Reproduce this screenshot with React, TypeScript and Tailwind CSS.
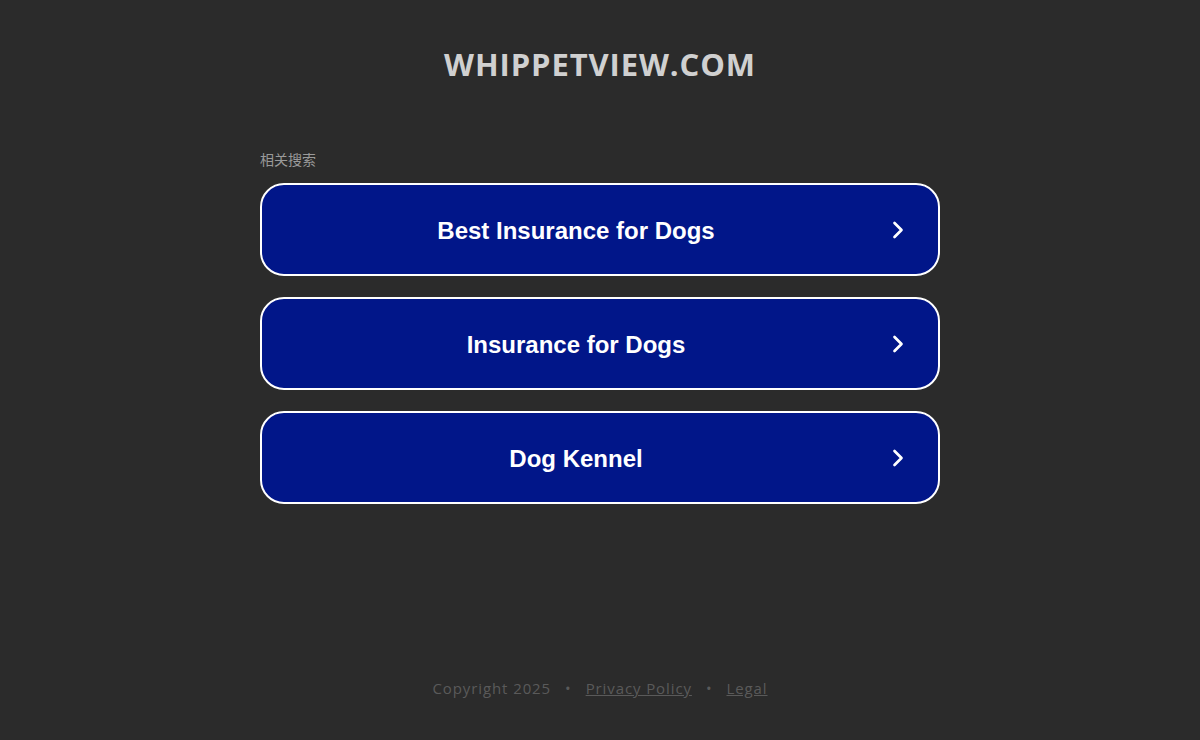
import { ChevronRight } from "lucide-react";

const TERMS = ["Best Insurance for Dogs", "Insurance for Dogs", "Dog Kennel"];

export default function App() {
  return (
    <div className="min-h-[740px] w-full bg-[#2b2b2b] flex flex-col items-center" style={{ fontFamily: '"Open Sans", "Noto Sans CJK SC", sans-serif' }}>
      <h1 className="mt-[44px] text-[31px] leading-[40px] font-bold tracking-[0.9px] text-[#d0d0d0]">WHIPPETVIEW.COM</h1>

      <div className="mt-[67px] w-[680px] flex flex-col">
        <div className="text-[14px] leading-[16px] text-[#9a9a9a] mb-[16px]" style={{ fontFamily: '"Noto Sans CJK SC", sans-serif' }}>相关搜索</div>
        <div className="flex flex-col gap-[21px]">
          {TERMS.map((t) => (
            <a
              key={t}
              href="#"
              className="h-[93px] rounded-[24px] border-2 border-white bg-[#011689] flex items-center pl-[25px] pr-[26px]"
            >
              <span className="flex-1 pt-[2px] text-center text-white text-[24px] font-bold" style={{ fontFamily: '"Liberation Sans", Arial, sans-serif' }}>{t}</span>
              <ChevronRight className="ml-[19px] text-white w-[28px] h-[28px]" strokeWidth={2.3} />
            </a>
          ))}
        </div>
      </div>

      <div className="mt-[173px] flex items-center gap-[14px] text-[15px] tracking-[0.9px] text-[#5a5a5a]">
        <span>Copyright 2025</span>
        <span>•</span>
        <a href="#" className="underline">Privacy Policy</a>
        <span>•</span>
        <a href="#" className="underline">Legal</a>
      </div>
    </div>
  );
}
